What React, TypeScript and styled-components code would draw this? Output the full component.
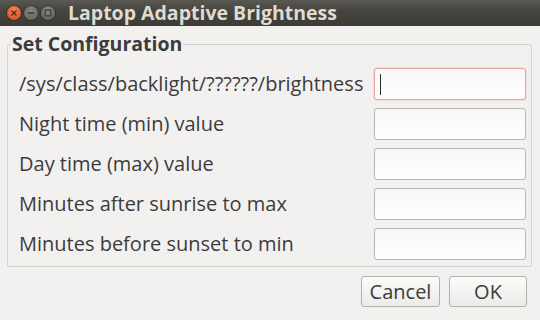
import React from 'react'
import styled, { createGlobalStyle } from 'styled-components'

const GlobalStyle = createGlobalStyle`
  html, body {
    margin: 0;
    padding: 0;
    background: #f2f1f0;
  }
  body {
    font-family: "Open Sans", "DejaVu Sans", sans-serif;
    color: #3c3c3c;
  }
`

const Window = styled.div`
  width: 540px;
  height: 320px;
  display: flex;
  flex-direction: column;
  background: #f2f1f0;
  overflow: hidden;
`

const TitleBar = styled.div`
  height: 26px;
  flex: none;
  display: flex;
  align-items: center;
  padding-left: 7px;
  background: linear-gradient(to bottom, #5a5852, #46453f 40%, #3c3b37);
`

const WinButtons = styled.div`
  display: flex;
  gap: 3px;
  margin-right: 13px;
`

const WinBtn = styled.div<{ $close?: boolean }>`
  width: 14px;
  height: 14px;
  border-radius: 50%;
  display: flex;
  align-items: center;
  justify-content: center;
  background: ${p => p.$close
    ? 'radial-gradient(circle at 50% 35%, #f9875a, #e0562a 70%, #c2441d)'
    : 'radial-gradient(circle at 50% 35%, #8a8883, #6b6964 70%, #55534e)'};
  box-shadow: 0 0 0 1px rgba(0, 0, 0, 0.25);
`

const Title = styled.div`
  font-family: "Open Sans", sans-serif;
  font-weight: 700;
  font-size: 19.5px;
  line-height: 22px;
  color: #dfdbd2;
`

const Body = styled.div`
  flex: 1;
  display: flex;
  flex-direction: column;
  padding: 7px 8px 0 7px;
`

const Group = styled.fieldset`
  margin: 0;
  padding: 13px 5px 6px 11px;
  border: 1px solid #d6d4d0;
  border-radius: 2px;
  min-width: 0;
`

const Legend = styled.legend`
  margin-left: -8px;
  padding: 0 1px;
  font-weight: 700;
  font-size: 19.5px;
  line-height: 22px;
  color: #3c3c3c;
`

const Rows = styled.div`
  display: grid;
  grid-template-columns: 1fr 152px;
  row-gap: 8px;
  align-items: center;
`

const Label = styled.label`
  font-size: 20px;
  line-height: 24px;
  color: #3c3c3c;
  white-space: nowrap;
`

const Field = styled.div<{ $focused?: boolean }>`
  height: 32px;
  box-sizing: border-box;
  border: 1px solid ${p => (p.$focused ? '#e3a59c' : '#b9b7b3')};
  border-radius: 3px;
  background: linear-gradient(to bottom, #f7f7f7, #ffffff);
  box-shadow: ${p => (p.$focused ? '0 0 0 1px rgba(240, 170, 160, 0.25)' : 'none')};
  display: flex;
  align-items: center;
  padding-left: 5px;
`

const Caret = styled.div`
  width: 1px;
  height: 21px;
  background: #2a2a2a;
`

const Footer = styled.div`
  display: flex;
  justify-content: flex-end;
  gap: 9px;
  padding: 9px 5px 0 0;
`

const Button = styled.button<{ $width: number }>`
  width: ${p => p.$width}px;
  height: 31px;
  box-sizing: border-box;
  border: 1px solid #b3b1ad;
  border-radius: 3px;
  background: linear-gradient(to bottom, #fbfbfa, #ecebe9);
  font-family: "Open Sans", "DejaVu Sans", sans-serif;
  font-size: 20px;
  line-height: 24px;
  color: #3c3c3c;
  padding: 0;
`

const fields = [
  '/sys/class/backlight/??????/brightness',
  'Night time (min) value',
  'Day time (max) value',
  'Minutes after sunrise to max',
  'Minutes before sunset to min',
]

export default function App() {
  return (
    <Window>
      <GlobalStyle />
      <TitleBar>
        <WinButtons>
          <WinBtn $close>
            <svg width="8" height="8" viewBox="0 0 8 8">
              <path d="M1.5 1.5 L6.5 6.5 M6.5 1.5 L1.5 6.5" stroke="#5a2412" strokeWidth="1.4" />
            </svg>
          </WinBtn>
          <WinBtn>
            <svg width="8" height="8" viewBox="0 0 8 8">
              <path d="M1 4 H7" stroke="#3a3935" strokeWidth="1.6" />
            </svg>
          </WinBtn>
          <WinBtn>
            <svg width="8" height="8" viewBox="0 0 8 8">
              <rect x="1.2" y="1.2" width="5.6" height="5.6" fill="none" stroke="#3a3935" strokeWidth="1.2" />
            </svg>
          </WinBtn>
        </WinButtons>
        <Title>Laptop Adaptive Brightness</Title>
      </TitleBar>
      <Body>
        <Group>
          <Legend>Set Configuration</Legend>
          <Rows>
            {fields.map((f, i) => (
              <React.Fragment key={f}>
                <Label>{f}</Label>
                <Field $focused={i === 0}>{i === 0 && <Caret />}</Field>
              </React.Fragment>
            ))}
          </Rows>
        </Group>
        <Footer>
          <Button $width={79}>Cancel</Button>
          <Button $width={78}>OK</Button>
        </Footer>
      </Body>
    </Window>
  )
}
